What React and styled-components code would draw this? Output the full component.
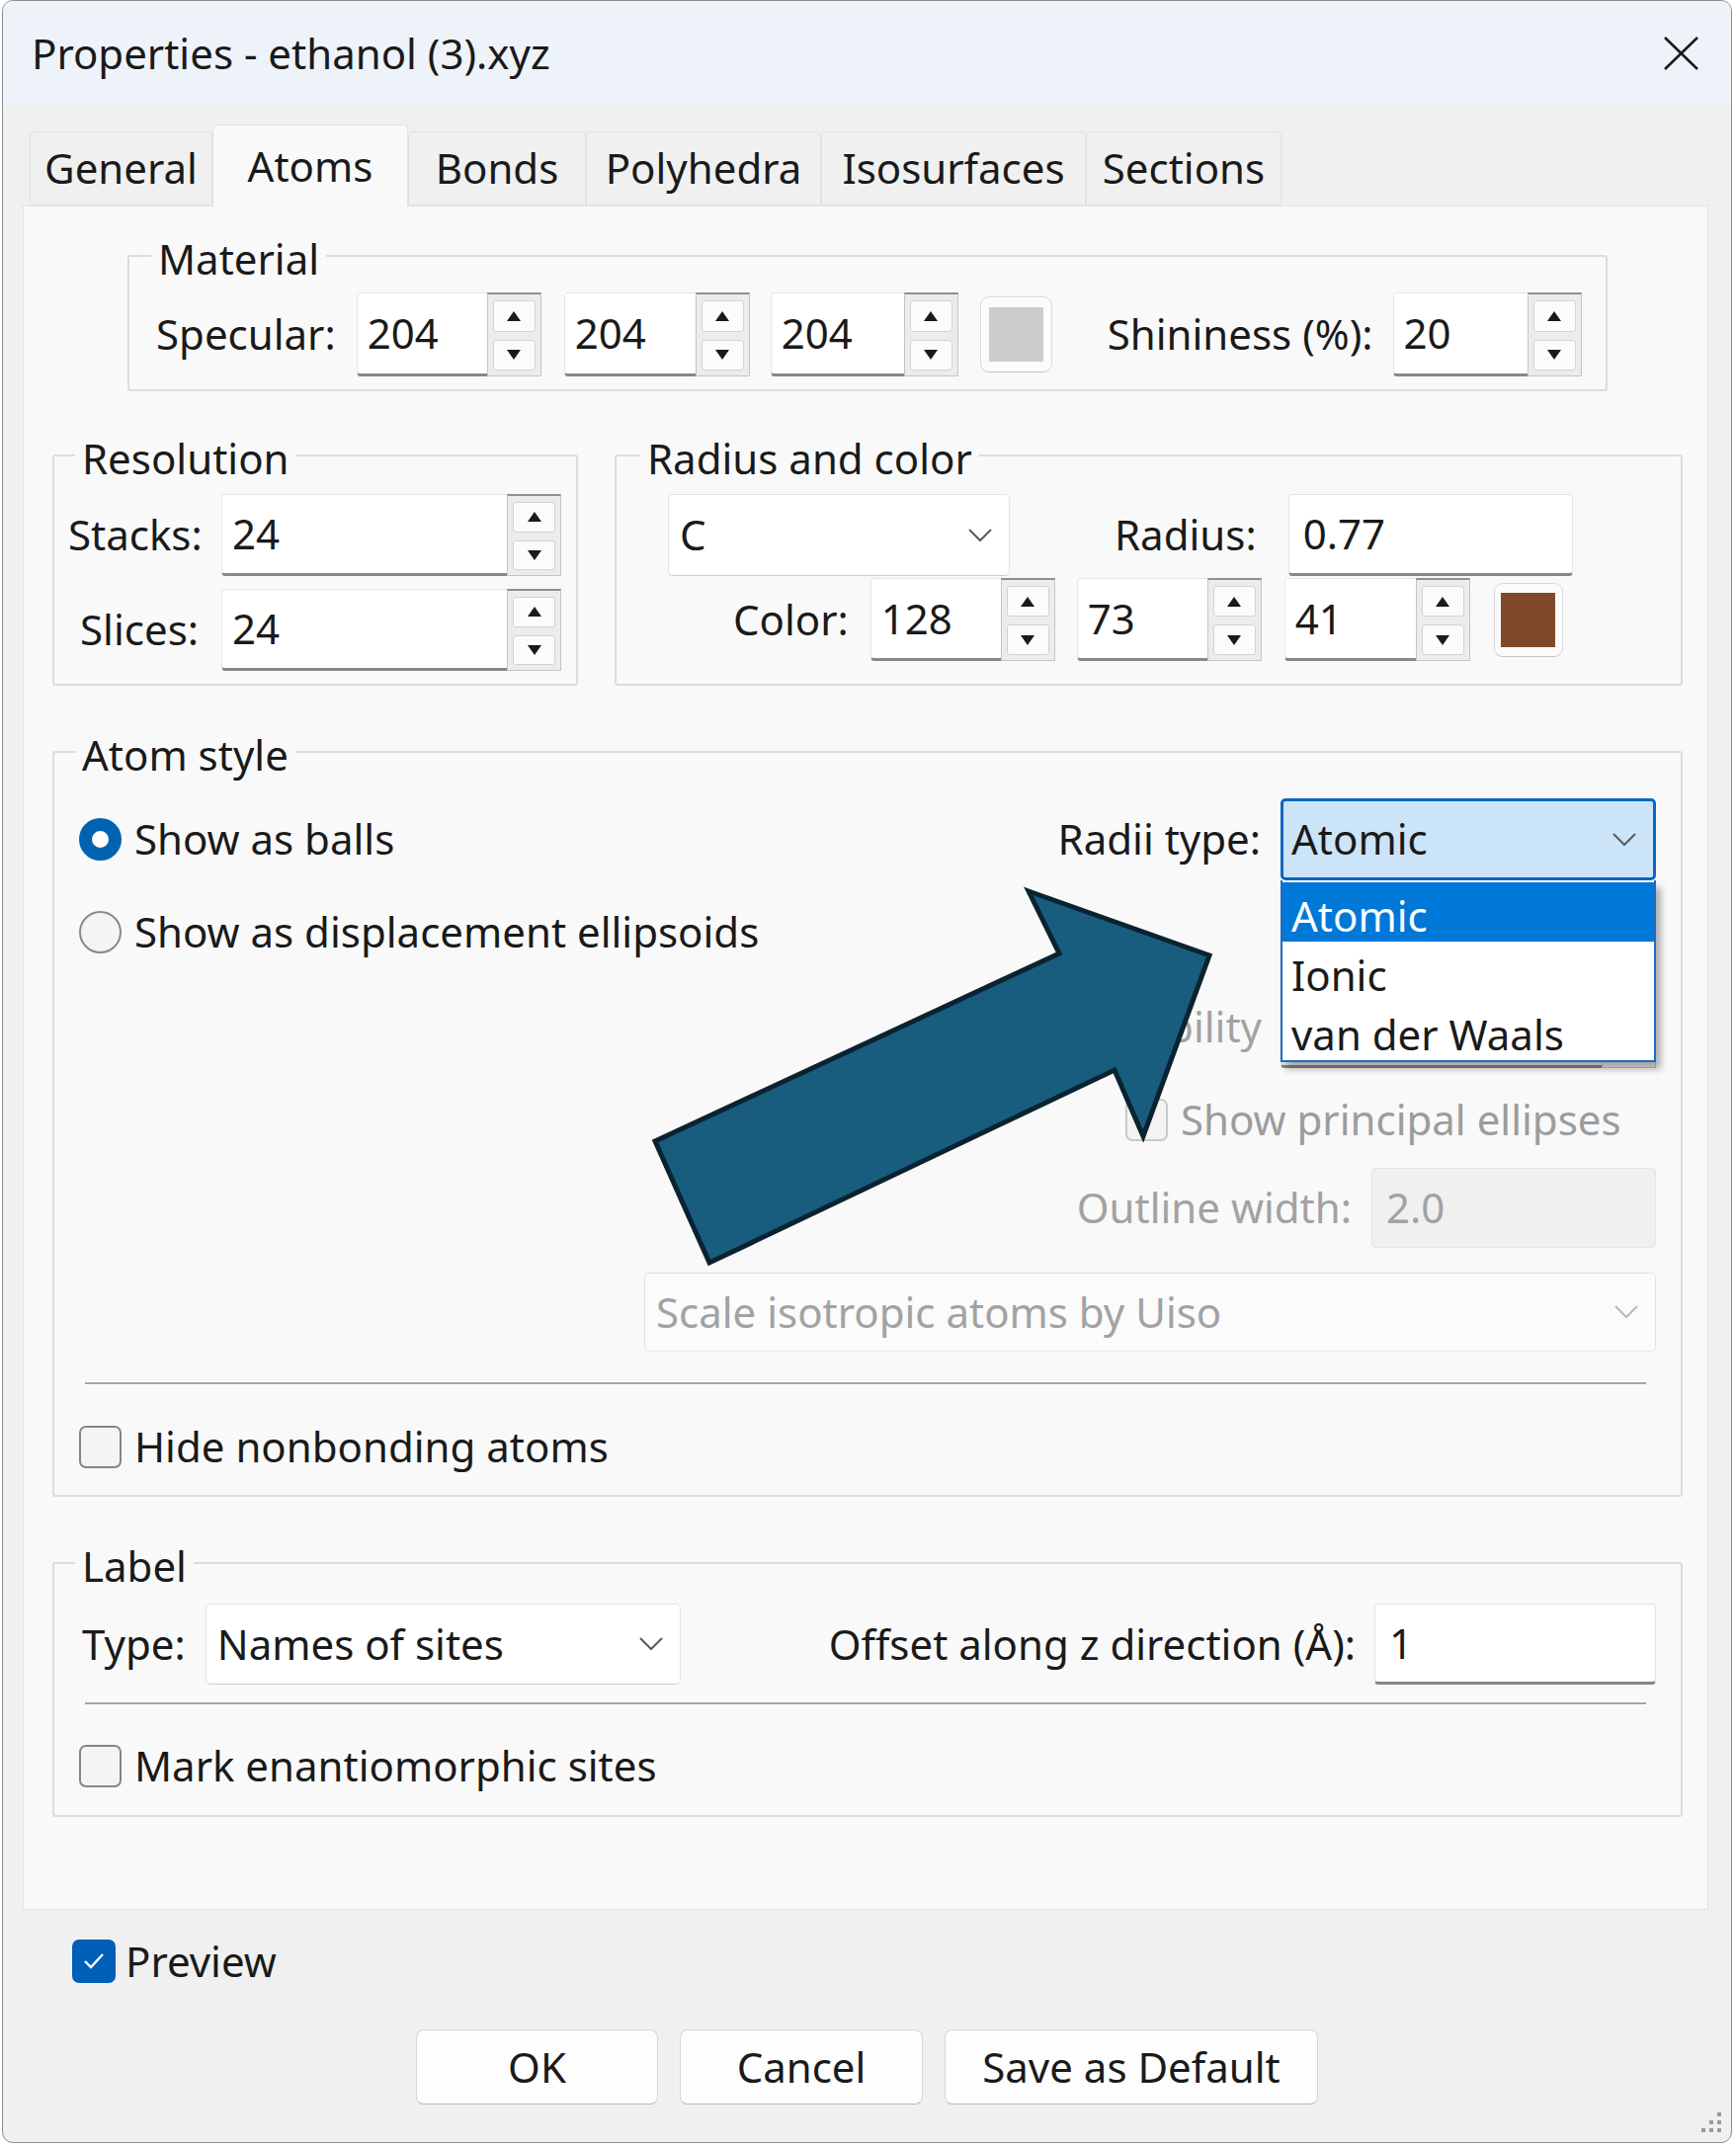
import React from 'react';
import styled, { createGlobalStyle } from 'styled-components';

const GlobalStyle = createGlobalStyle`
  * { box-sizing: border-box; }
  html, body { margin: 0; padding: 0; background: #ffffff; }
  body {
    font-family: "Noto Sans", "Open Sans", "DejaVu Sans", sans-serif;
    font-size: 42px;
    line-height: 1.2;
    color: #1a1a1a;
  }
`;

const Window = styled.div`
  position: relative;
  margin-left: 2px;
  width: 1751px;
  height: 2169px;
  border: 1px solid #8d8d8d;
  border-radius: 11px;
  background: #f0f0f0;
  overflow: hidden;
  display: flex;
  flex-direction: column;
`;

const TitleBar = styled.div`
  flex: none;
  height: 106px;
  display: flex;
  align-items: center;
  justify-content: space-between;
  padding: 0 32px 0 29px;
  background: #eef3f9;
`;

const NoWrap = styled.span`
  white-space: nowrap;
`;

const TabBar = styled.div`
  flex: none;
  height: 101px;
  display: flex;
  align-items: flex-end;
  padding-left: 27px;
`;

const Tab = styled.div`
  position: relative;
  z-index: ${p => (p.$active ? 2 : 0)};
  width: ${p => p.$w}px;
  height: ${p => (p.$active ? 83 : 75)}px;
  margin-bottom: ${p => (p.$active ? -1 : 0)}px;
  display: flex;
  align-items: center;
  justify-content: center;
  background: ${p => (p.$active ? '#f9f9f9' : '#f0f0f0')};
  border: 1px solid #e1e1e1;
  border-bottom: ${p => (p.$active ? 'none' : '1px solid #e1e1e1')};
  border-radius: 4px 4px 0 0;
  white-space: nowrap;
`;

const Pane = styled.div`
  flex: none;
  height: 1725px;
  margin: 0 23px 0 20px;
  padding: 26px 25px 0 29px;
  background: #f9f9f9;
  border: 1px solid #e2e2e2;
  display: flex;
  flex-direction: column;
`;

const Group = styled.fieldset`
  flex: ${p => (p.$grow ? 1 : 'none')};
  margin: ${p => p.$mt || 0}px 0 0 0;
  min-width: 0;
  border: 2px solid #dcdcdc;
  border-radius: 3px;
  padding: ${p => p.$pad};
`;

const MaterialGroup = styled(Group)`
  width: 1498px;
  align-self: center;
`;

const Legend = styled.legend`
  padding: 6px 7px 0;
  margin-left: ${p => p.$ml}px;
  line-height: 42px;
  white-space: nowrap;
`;

const GroupRow = styled.div`
  display: flex;
  gap: 37px;
  margin-top: 41px;
`;

const Row = styled.div`
  display: flex;
  align-items: center;
  height: ${p => p.$h}px;
  margin-top: ${p => p.$mt || 0}px;
  padding-left: ${p => p.$pl || 0}px;
  justify-content: ${p => p.$justify || 'flex-start'};
`;

const Label = styled.span`
  flex: none;
  margin-left: ${p => p.$ml || 0}px;
  color: ${p => (p.$disabled ? '#a2a2a2' : '#1a1a1a')};
  white-space: nowrap;
`;

const Push = styled.span`
  flex: 1;
`;

/* spin box */
const SpinWrap = styled.div`
  flex: none;
  display: flex;
  width: ${p => p.$w}px;
  height: ${p => p.$h}px;
  margin-left: ${p => p.$ml || 0}px;
`;

const SpinField = styled.div`
  flex: 1;
  display: flex;
  align-items: center;
  padding-left: 10px;
  background: ${p => (p.$disabled ? '#f3f3f3' : '#ffffff')};
  color: ${p => (p.$disabled ? '#a2a2a2' : '#1a1a1a')};
  border: 1px solid #e6e6e6;
  border-right: none;
  border-bottom: 3px solid #878787;
  border-radius: 4px 0 0 4px;
`;

const SpinCol = styled.div`
  flex: none;
  width: 55px;
  display: flex;
  flex-direction: column;
  gap: 8px;
  padding: 6px 5px 5px;
  background: #ececec;
  border: 1px solid #c4c4c4;
  border-top: 2px solid #8f8f8f;
`;

const SpinBtn = styled.div`
  flex: 1;
  display: flex;
  align-items: center;
  justify-content: center;
  background: #fbfbfb;
  border: 1px solid #d3d3d3;
  border-radius: 3px;
`;

const Tri = ({ down }) => (
  <svg width="14" height="10" viewBox="0 0 14 10">
    <polygon points={down ? '0,0 14,0 7,10' : '0,10 14,10 7,0'} fill="#1a1a1a" />
  </svg>
);

const SpinBox = ({ value, w, h = 85, ml, disabled }) => (
  <SpinWrap $w={w} $h={h} $ml={ml}>
    <SpinField $disabled={disabled}>{value}</SpinField>
    <SpinCol>
      <SpinBtn><Tri /></SpinBtn>
      <SpinBtn><Tri down /></SpinBtn>
    </SpinCol>
  </SpinWrap>
);

/* combo box */
const ComboBox = styled.div`
  flex: none;
  width: ${p => p.$w}px;
  height: ${p => p.$h}px;
  margin-left: ${p => p.$ml || 0}px;
  display: flex;
  align-items: center;
  justify-content: space-between;
  padding: 0 17px 0 ${p => (p.$focus ? 8 : 11)}px;
  background: ${p => (p.$focus ? '#cce4f7' : p.$disabled ? '#fbfbfb' : '#ffffff')};
  color: ${p => (p.$disabled ? '#a2a2a2' : '#1a1a1a')};
  border: ${p => (p.$focus ? '3px solid #0b66c3' : '1px solid #e2e2e2')};
  border-bottom-color: ${p => (p.$focus ? '#0b66c3' : p.$disabled ? '#e8e8e8' : '#cdcdcd')};
  border-radius: 5px;
  white-space: nowrap;
`;

const Chevron = ({ color = '#5a5a5a' }) => (
  <svg width="24" height="14" viewBox="0 0 24 14">
    <polyline points="1,1 12,12 23,1" fill="none" stroke={color} strokeWidth="2" />
  </svg>
);

const Combo = ({ value, w, h = 83, ml, focus, disabled }) => (
  <ComboBox $w={w} $h={h} $ml={ml} $focus={focus} $disabled={disabled}>
    <span>{value}</span>
    <Chevron color={disabled ? '#b8b8b8' : '#5a5a5a'} />
  </ComboBox>
);

const ComboAnchor = styled.div`
  position: relative;
  flex: none;
  margin-left: ${p => p.$ml || 0}px;
`;

const DropList = styled.div`
  position: absolute;
  z-index: 5;
  top: 100%;
  left: 0;
  width: 100%;
  padding-top: 2px;
  background: #ffffff;
  border: 2px solid #1c6cc4;
  border-top: none;
  box-shadow: 5px 7px 7px rgba(0, 0, 0, 0.3);
`;

const DropItem = styled.div`
  height: 60px;
  display: flex;
  align-items: center;
  padding: 8px 0 0 9px;
  background: ${p => (p.$selected ? '#0078d7' : 'transparent')};
  color: ${p => (p.$selected ? '#ffffff' : '#1a1a1a')};
  white-space: nowrap;
`;

/* line edit */
const LineEdit = styled.div`
  flex: none;
  width: ${p => p.$w}px;
  height: ${p => p.$h}px;
  margin-left: ${p => p.$ml || 0}px;
  display: flex;
  align-items: center;
  padding-left: 14px;
  background: ${p => (p.$disabled ? '#f0f0f0' : '#ffffff')};
  color: ${p => (p.$disabled ? '#a2a2a2' : '#1a1a1a')};
  border: 1px solid #e4e4e4;
  border-bottom: ${p => (p.$disabled ? '1px solid #e4e4e4' : '3px solid #878787')};
  border-radius: 4px;
`;

const Swatch = styled.div`
  flex: none;
  width: ${p => p.$w}px;
  height: ${p => p.$h}px;
  margin-left: ${p => p.$ml}px;
  display: flex;
  align-items: center;
  justify-content: center;
  background: #fbfbfb;
  border: 1px solid #d9d9d9;
  border-bottom-color: #c3c3c3;
  border-radius: 9px;
`;

const SwatchFill = styled.div`
  width: 55px;
  height: 55px;
  background: ${p => p.$color};
`;

/* resolution grid */
const ResGrid = styled.div`
  display: grid;
  grid-template-columns: 132px 344px;
  column-gap: 23px;
  row-gap: 13px;
  align-items: center;
`;

const GridLabel = styled(Label)`
  text-align: right;
`;

/* radio / check */
const Option = styled.div`
  flex: none;
  display: flex;
  align-items: center;
  gap: ${p => p.$gap || 13}px;
  height: ${p => p.$h}px;
  margin-top: ${p => p.$mt || 0}px;
  padding-left: ${p => p.$pl || 0}px;
  color: ${p => (p.$disabled ? '#9c9c9c' : '#1a1a1a')};
  white-space: nowrap;
`;

const RadioCircle = styled.span`
  flex: none;
  width: 43px;
  height: 43px;
  border-radius: 50%;
  border: ${p => (p.$checked ? '13px solid #0063b1' : '2px solid #8a8a8a')};
  background: ${p => (p.$checked ? '#ffffff' : '#f4f4f4')};
`;

const CheckBox = styled.span`
  flex: none;
  width: ${p => p.$size || 43}px;
  height: ${p => p.$size || 43}px;
  display: flex;
  align-items: center;
  justify-content: center;
  border-radius: 7px;
  border: 2px solid ${p => (p.$checked ? '#005fb8' : p.$disabled ? '#c9c9c9' : '#858585')};
  background: ${p => (p.$checked ? '#005fb8' : '#f4f4f4')};
`;

const Tick = () => (
  <svg width="22" height="18" viewBox="0 0 22 18">
    <polyline points="2,9 8,15 20,2" fill="none" stroke="#ffffff" strokeWidth="2.4" />
  </svg>
);

const Separator = styled.div`
  height: 3px;
  margin: ${p => p.$mt}px 10px 0 6px;
  background: #a5a5a5;
  border-bottom: 1px solid #ffffff;
`;

/* atom style layout */
const AtomTop = styled.div`
  display: flex;
  justify-content: space-between;
`;

const LeftCol = styled.div`
  display: flex;
  flex-direction: column;
  gap: 11px;
`;

const RightCol = styled.div`
  width: 605px;
  display: flex;
  flex-direction: column;
`;

/* bottom */
const Buttons = styled.div`
  display: flex;
  justify-content: center;
  gap: 22px;
  margin-top: 47px;
`;

const Button = styled.div`
  width: ${p => p.$w}px;
  height: 76px;
  display: flex;
  align-items: center;
  justify-content: center;
  background: #fdfdfd;
  border: 1px solid #d6d6d6;
  border-bottom-color: #b8b8b8;
  border-radius: 8px;
  white-space: nowrap;
`;

const Overlay = styled.svg`
  position: absolute;
  left: 0;
  top: 0;
  width: 100%;
  height: 100%;
  z-index: 10;
  pointer-events: none;
`;

const Grip = styled.svg`
  position: absolute;
  right: 8px;
  bottom: 6px;
`;

const tabs = [
  ['General', 185],
  ['Atoms', 198, true],
  ['Bonds', 180],
  ['Polyhedra', 238],
  ['Isosurfaces', 268],
  ['Sections', 198],
];

export default function App() {
  return (
    <>
      <GlobalStyle />
      <Window>
        <TitleBar>
          <NoWrap>Properties - ethanol (3).xyz</NoWrap>
          <svg width="37" height="36" viewBox="0 0 37 36">
            <line x1="2" y1="2" x2="35" y2="34" stroke="#1a1a1a" strokeWidth="2.6" />
            <line x1="35" y1="2" x2="2" y2="34" stroke="#1a1a1a" strokeWidth="2.6" />
          </svg>
        </TitleBar>

        <TabBar>
          {tabs.map(([name, w, active]) => (
            <Tab key={name} $w={w} $active={active}>{name}</Tab>
          ))}
        </TabBar>

        <Pane>
          <MaterialGroup $pad="13px 24px 13px 27px">
            <Legend $ml={-5}>Material</Legend>
            <Row $h={85}>
              <Label>Specular:</Label>
              <SpinBox value="204" w={187} ml={21} />
              <SpinBox value="204" w={188} ml={23} />
              <SpinBox value="204" w={190} ml={21} />
              <Swatch $w={73} $h={77} $ml={22}><SwatchFill $color="#cccccc" /></Swatch>
              <Label $ml={56}>Shininess (%):</Label>
              <SpinBox value="20" w={191} ml={20} />
            </Row>
          </MaterialGroup>

          <GroupRow>
            <Group $pad="15px 15px 13px 14px">
              <Legend $ml={7}>Resolution</Legend>
              <ResGrid>
                <GridLabel>Stacks:</GridLabel>
                <SpinBox value="24" w={344} h={83} />
                <GridLabel>Slices:</GridLabel>
                <SpinBox value="24" w={344} h={83} />
              </ResGrid>
            </Group>

            <Group $grow $pad="15px 20px 23px 52px">
              <Legend $ml={-28}>Radius and color</Legend>
              <Row $h={83}>
                <Combo value="C" w={346} />
                <Label $ml={106}>Radius:</Label>
                <LineEdit $w={288} $h={83} $ml={32}>0.77</LineEdit>
              </Row>
              <Row $h={84} $mt={2}>
                <Label $ml={66}>Color:</Label>
                <SpinBox value="128" w={187} h={84} ml={22} />
                <SpinBox value="73" w={187} h={84} ml={22} />
                <SpinBox value="41" w={188} h={84} ml={23} />
                <Swatch $w={70} $h={75} $ml={24}><SwatchFill $color="#804929" /></Swatch>
              </Row>
            </Group>
          </GroupRow>

          <Group $mt={43} $pad="23px 25px 24px 25px">
            <Legend $ml={-4}>Atom style</Legend>
            <AtomTop>
              <LeftCol>
                <Option $h={83}><RadioCircle $checked />Show as balls</Option>
                <Option $h={83}><RadioCircle />Show as displacement ellipsoids</Option>
              </LeftCol>
              <RightCol>
                <Row $h={83} $justify="flex-end">
                  <Label>Radii type:</Label>
                  <ComboAnchor $ml={20}>
                    <Combo value="Atomic" w={380} focus />
                    <DropList>
                      <DropItem $selected>Atomic</DropItem>
                      <DropItem>Ionic</DropItem>
                      <DropItem>van der Waals</DropItem>
                    </DropList>
                  </ComboAnchor>
                </Row>
                <Row $h={83} $mt={107} $justify="flex-end">
                  <Label $disabled>Probability</Label>
                  <SpinBox w={380} h={83} ml={19} disabled />
                </Row>
                <Option $h={50} $mt={27} $pl={68} $disabled>
                  <CheckBox $disabled />Show principal ellipses
                </Option>
                <Row $h={81} $mt={24} $justify="flex-end">
                  <Label $disabled>Outline width:</Label>
                  <LineEdit $w={288} $h={81} $ml={20} $disabled>2.0</LineEdit>
                </Row>
              </RightCol>
            </AtomTop>
            <Row $h={80} $mt={25} $justify="flex-end">
              <Combo value="Scale isotropic atoms by Uiso" w={1024} h={80} disabled />
            </Row>
            <Separator $mt={31} />
            <Option $h={50} $mt={37}><CheckBox />Hide nonbonding atoms</Option>
          </Group>

          <Group $mt={43} $pad="17px 25px 25px 25px">
            <Legend $ml={-4}>Label</Legend>
            <Row $h={82}>
              <Label $ml={3}>Type:</Label>
              <Combo value="Names of sites" w={481} h={82} ml={20} />
              <Push />
              <Label>Offset along z direction (Å):</Label>
              <LineEdit $w={285} $h={82} $ml={19}>1</LineEdit>
            </Row>
            <Separator $mt={18} />
            <Option $h={50} $mt={36}><CheckBox />Mark enantiomorphic sites</Option>
          </Group>
        </Pane>

        <Option $h={44} $mt={30} $pl={70} $gap={10}>
          <CheckBox $checked $size={44}><Tick /></CheckBox>Preview
        </Option>

        <Buttons>
          <Button $w={245}>OK</Button>
          <Button $w={246}>Cancel</Button>
          <Button $w={378}>Save as Default</Button>
        </Buttons>

        <Overlay viewBox="0 0 1749 2167" preserveAspectRatio="none">
          <polygon
            points="1038,901 1221,966 1154,1149 1125,1082 715,1277 660,1154 1069,964"
            fill="#185d7e"
            stroke="#0b2331"
            strokeWidth="5"
            strokeLinejoin="miter"
          />
        </Overlay>

        <Grip width="30" height="30" viewBox="0 0 30 30">
          {[[24, 6], [16, 14], [24, 14], [8, 22], [16, 22], [24, 22]].map(([x, y]) => (
            <rect key={`${x}-${y}`} x={x} y={y} width="4" height="4" fill="#9a9a9a" />
          ))}
        </Grip>
      </Window>
    </>
  );
}
